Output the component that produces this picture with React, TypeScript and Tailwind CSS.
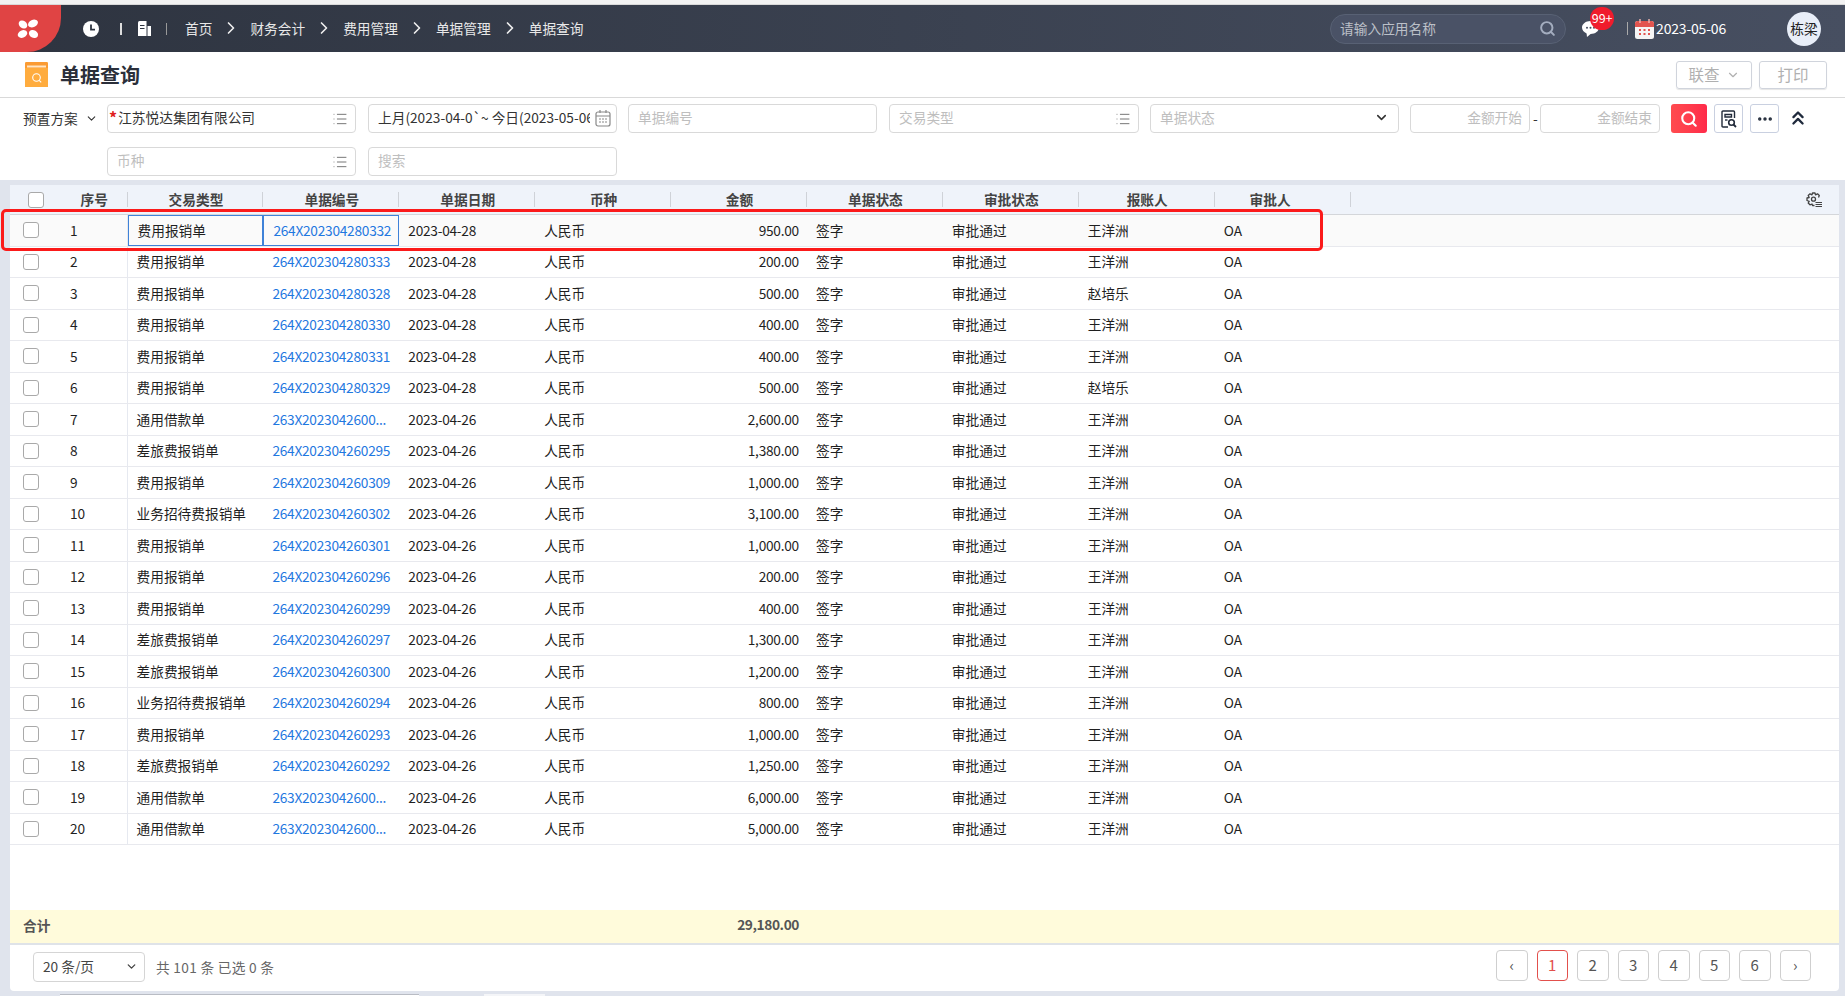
import type { ReactNode } from 'react';
import { ChevronDown, ChevronRight, ChevronsUp, Ellipsis, List, Search } from 'lucide-react';

interface DocRow {
  type: string;
  code: string;
  date: string;
  amount: string;
  person: string;
}

const FEE = '费用报销单';
const LOAN = '通用借款单';
const TRAVEL = '差旅费报销单';
const HOST = '业务招待费报销单';
const WANG = '王洋洲';
const ZHAO = '赵培乐';
const LOAN_CODE = '263X2023042600...';

const rows: DocRow[] = [
  { type: FEE, code: '264X202304280332', date: '2023-04-28', amount: '950.00', person: WANG },
  { type: FEE, code: '264X202304280333', date: '2023-04-28', amount: '200.00', person: WANG },
  { type: FEE, code: '264X202304280328', date: '2023-04-28', amount: '500.00', person: ZHAO },
  { type: FEE, code: '264X202304280330', date: '2023-04-28', amount: '400.00', person: WANG },
  { type: FEE, code: '264X202304280331', date: '2023-04-28', amount: '400.00', person: WANG },
  { type: FEE, code: '264X202304280329', date: '2023-04-28', amount: '500.00', person: ZHAO },
  { type: LOAN, code: LOAN_CODE, date: '2023-04-26', amount: '2,600.00', person: WANG },
  { type: TRAVEL, code: '264X202304260295', date: '2023-04-26', amount: '1,380.00', person: WANG },
  { type: FEE, code: '264X202304260309', date: '2023-04-26', amount: '1,000.00', person: WANG },
  { type: HOST, code: '264X202304260302', date: '2023-04-26', amount: '3,100.00', person: WANG },
  { type: FEE, code: '264X202304260301', date: '2023-04-26', amount: '1,000.00', person: WANG },
  { type: FEE, code: '264X202304260296', date: '2023-04-26', amount: '200.00', person: WANG },
  { type: FEE, code: '264X202304260299', date: '2023-04-26', amount: '400.00', person: WANG },
  { type: TRAVEL, code: '264X202304260297', date: '2023-04-26', amount: '1,300.00', person: WANG },
  { type: TRAVEL, code: '264X202304260300', date: '2023-04-26', amount: '1,200.00', person: WANG },
  { type: HOST, code: '264X202304260294', date: '2023-04-26', amount: '800.00', person: WANG },
  { type: FEE, code: '264X202304260293', date: '2023-04-26', amount: '1,000.00', person: WANG },
  { type: TRAVEL, code: '264X202304260292', date: '2023-04-26', amount: '1,250.00', person: WANG },
  { type: LOAN, code: LOAN_CODE, date: '2023-04-26', amount: '6,000.00', person: WANG },
  { type: LOAN, code: LOAN_CODE, date: '2023-04-26', amount: '5,000.00', person: WANG },
];

const crumbs = ['首页', '财务会计', '费用管理', '单据管理', '单据查询'];
const headers = ['交易类型', '单据编号', '单据日期', '币种', '金额', '单据状态', '审批状态', '报账人'];
const pages = ['‹', '1', '2', '3', '4', '5', '6', '›'];

function LogoMark() {
  return (
    <svg width="24" height="22" viewBox="0 0 24 22" fill="#fff">
      <ellipse cx="7" cy="6.5" rx="4.6" ry="3.6" transform="rotate(35 7 6.5)" />
      <ellipse cx="17" cy="5.5" rx="5.2" ry="3.6" transform="rotate(-25 17 5.5)" />
      <ellipse cx="6.5" cy="16" rx="5" ry="3.6" transform="rotate(-25 6.5 16)" />
      <ellipse cx="17.5" cy="16" rx="4.8" ry="3.8" transform="rotate(30 17.5 16)" />
    </svg>
  );
}

function ClockIcon() {
  return (
    <svg width="16" height="16" viewBox="0 0 16 16">
      <circle cx="8" cy="8" r="8" fill="#fff" />
      <path d="M8 3.5V8.6H12" fill="none" stroke="#2e3440" strokeWidth="1.8" />
    </svg>
  );
}

function BookIcon() {
  return (
    <svg width="15" height="15" viewBox="0 0 15 15">
      <path d="M1 15V1.5Q1 0 2.5 0H9.5V15Z" fill="#fff" />
      <path d="M10.5 5H14V15H10.5Z" fill="#fff" />
      <path d="M3 4.5H7.5M3 7.5H7.5" stroke="#2e3440" strokeWidth="1.2" />
    </svg>
  );
}

function ChatIcon() {
  return (
    <svg width="17" height="16" viewBox="0 0 17 16">
      <path d="M8.5 0C3.8 0 0 2.9 0 6.6c0 2.6 1.8 4.8 4.6 5.8L5 16l3.6-2.9c4.6 0 8.4-2.9 8.4-6.5S13.2 0 8.5 0Z" fill="#fff" />
      <circle cx="5" cy="6.8" r="1" fill="#454d5f" />
      <circle cx="8.5" cy="6.8" r="1" fill="#454d5f" />
      <circle cx="12" cy="6.8" r="1" fill="#454d5f" />
    </svg>
  );
}

function CalendarIcon() {
  return (
    <svg width="19" height="20" viewBox="0 0 19 20">
      <rect x="0" y="2" width="19" height="18" rx="2.5" fill="#f5f5f5" />
      <path d="M0 8V4.5Q0 2 2.5 2H16.5Q19 2 19 4.5V8Z" fill="#e25550" />
      <path d="M5 0V4M14 0V4" stroke="#f3b7b3" strokeWidth="1.4" />
      <path d="M4 11H6M8.5 11H10.5M13 11H15M4 15H6M8.5 15H10.5M13 15H15" stroke="#e25550" strokeWidth="1.8" />
    </svg>
  );
}

function PageSearchIcon() {
  return (
    <svg width="16" height="18" viewBox="0 0 16 18" fill="none" stroke="#222b3a" strokeWidth="1.4">
      <path d="M7 17H2Q1 17 1 16V2Q1 1 2 1H12.5Q13.5 1 13.5 2V8" />
      <path d="M4 4.5H10.5V7H4Z" />
      <path d="M4 10H6.5" />
      <circle cx="10.5" cy="12.5" r="2.8" strokeWidth="1.6" />
      <path d="M12.5 14.5L15 17" strokeWidth="1.8" />
    </svg>
  );
}

function GearListIcon() {
  return (
    <svg width="16" height="16" viewBox="0 0 16 16" fill="none" stroke="#444" className="ml-auto mr-[17px]">
      <path
        d="M8.5 13.5H6.5L6 12 4 12.8 2.2 11 3.2 9.3 1 8.5V6L3.2 5.5 2.2 3.5 4 1.8 6 2.8 6.5 1H9L9.5 2.8 11.5 1.8 13.3 3.5 12.5 5.5"
        strokeWidth="1.3"
        strokeLinejoin="round"
      />
      <circle cx="7.5" cy="7.2" r="2" strokeWidth="1.3" />
      <path d="M9.5 10.5H16M9.5 12.5H16M9.5 14.5H16" strokeWidth="1.1" />
    </svg>
  );
}

function OrderIcon() {
  return (
    <svg width="23" height="25" viewBox="0 0 23 25">
      <path d="M0 1.5Q0 0 1.5 0H21.5Q23 0 23 1.5V25H0Z" fill="#ffac3e" />
      <path d="M0 1.5Q0 0 1.5 0H21.5Q23 0 23 1.5V6H0Z" fill="#fb9b33" />
      <rect x="2" y="3.5" width="19" height="2" fill="#ffe6c4" />
      <circle cx="11.5" cy="15.5" r="3.8" fill="none" stroke="#fff" strokeWidth="1.1" />
      <path d="M14.2 18.3L16.2 20.3" stroke="#fff" strokeWidth="1.1" />
    </svg>
  );
}

function Checkbox() {
  return <span className="block h-4 w-4 rounded-[3px] border border-[#a9a9a9] bg-white" />;
}

function Field({ className, text, placeholder, list, right }: { className: string; text?: ReactNode; placeholder?: string; list?: boolean; right?: boolean }) {
  return (
    <div className={`flex h-[29px] items-center rounded border border-[#d9d9d9] bg-white pb-[2px] pl-[9px] pr-[7px] ${className} ${right ? 'justify-end' : 'justify-between'}`}>
      {placeholder ? <span className="text-[#bebebe]">{placeholder}</span> : text}
      {list && <List size={16} strokeWidth={1.5} className="mt-[2px] text-[#777]" />}
    </div>
  );
}

export default function App() {
  return (
    <div className="relative flex h-[996px] w-[1845px] flex-col overflow-hidden bg-[#e0e4ed] font-['Noto_Sans_CJK_SC','Noto_Sans',sans-serif] text-[13.7px] text-[#333]">
      <div className="h-[5px] shrink-0 border-b border-[#d9d9d9] bg-[#f2f2f2]" />

      {/* top bar */}
      <header className="flex h-[47px] shrink-0 items-center bg-linear-to-r from-[#2e3440] to-[#474f61] text-[#e8e8e8]">
        <div className="flex h-full w-[61px] items-center justify-center rounded-br-[34px] bg-[#e04444] pr-[6px]">
          <LogoMark />
        </div>
        <div className="ml-[22px] flex items-center">
          <ClockIcon />
          <span className="ml-[21px] h-[12px] w-[2px] bg-[#ddd]" />
          <span className="ml-[15px]">
            <BookIcon />
          </span>
          <span className="ml-[14px] h-[12px] w-px bg-[#999]" />
        </div>
        <nav className="ml-[18px] flex items-center pb-[1px]">
          {crumbs.map((c, i) => (
            <div key={c} className="flex items-center">
              {i > 0 && <ChevronRight size={20} strokeWidth={2} className="mx-[9px] text-[#eee]" />}
              <span>{c}</span>
            </div>
          ))}
        </nav>
        <div className="ml-auto flex items-center">
          <div className="flex h-[30px] w-[236px] items-center justify-between rounded-full border border-[#586174] bg-[#4a5266] pl-[9px] pr-[9px] text-[#bcc0c8]">
            <span>请输入应用名称</span>
            <Search size={17} strokeWidth={2.8} className="text-[#a4adbf]" />
          </div>
          <div className="relative ml-[16px] h-[16px] w-[17px]">
            <ChatIcon />
            <span className="absolute left-[8px] top-[-14px] flex h-[23px] w-[24px] items-center justify-center rounded-full bg-[#f01c2c] text-[12.5px] text-white">99+</span>
          </div>
          <span className="ml-[28px] h-[13px] w-px bg-[#aaa]" />
          <span className="ml-[7px]">
            <CalendarIcon />
          </span>
          <span className="ml-[2px] text-[14px] tracking-[-0.2px] text-white">2023-05-06</span>
          <div className="ml-[61px] mr-[24px] flex h-[34px] w-[34px] items-center justify-center rounded-full bg-[#e8eef8] text-[#222]">栋梁</div>
        </div>
      </header>

      {/* title */}
      <div className="flex h-[46px] shrink-0 items-center border-b border-[#d9d9d9] bg-white pl-[25px] pr-[18px]">
        <OrderIcon />
        <h1 className="ml-[12px] text-[20px] font-bold text-[#2b2f3a]">单据查询</h1>
        <div className="ml-auto flex gap-[7px] text-[15.5px] text-[#b0b0b0]">
          <button className="flex h-[28px] w-[76px] items-center justify-center gap-[6px] rounded-[3px] border border-[#d0d4dc] shadow-[0_1px_1px_rgba(0,0,0,0.1)]">
            联查 <ChevronDown size={14} strokeWidth={2} />
          </button>
          <button className="flex h-[28px] w-[68px] items-center justify-center rounded-[3px] border border-[#d0d4dc] shadow-[0_1px_1px_rgba(0,0,0,0.1)]">打印</button>
        </div>
      </div>

      {/* filters */}
      <section className="h-[82px] shrink-0 bg-white pl-[23px] pt-[6px]">
        <div className="flex items-center">
          <div className="flex w-[84px] items-center gap-[7px]">
            <span>预置方案</span>
            <ChevronDown size={13} strokeWidth={2} />
          </div>
          <Field
            className="w-[249px]"
            list
            text={
              <span className="-ml-[8px] flex items-center">
                <span className="mr-px text-[16px] font-bold leading-none text-[#e02020]">*</span>江苏悦达集团有限公司
              </span>
            }
          />
          <div className="ml-[12px] flex h-[29px] w-[249px] items-center justify-between overflow-hidden rounded border border-[#d9d9d9] pb-[2px] pl-[9px] pr-[5px]">
            <span className="w-[212px] overflow-hidden whitespace-nowrap">上月(2023-04-0`~ 今日(2023-05-06</span>
            <svg width="16" height="17" viewBox="0 0 16 17" fill="none" stroke="#888" strokeWidth="1.2" className="mt-[2px]">
              <rect x="1" y="2" width="14" height="14" rx="2" />
              <path d="M1 6H15M5 0V3M11 0V3M4 9H6M7 9H9M10 9H12M4 12H6M7 12H9M10 12H12" />
            </svg>
          </div>
          <Field className="ml-[11px] w-[249px]" placeholder="单据编号" />
          <Field className="ml-[12px] w-[250px]" placeholder="交易类型" list />
          <div className="ml-[11px] flex h-[29px] w-[249px] items-center justify-between rounded border border-[#d9d9d9] pb-[2px] pl-[9px] pr-[9px] text-[#bebebe]">
            <span>单据状态</span>
            <ChevronDown size={15} strokeWidth={2.5} className="text-[#333]" />
          </div>
          <Field className="ml-[11px] w-[120px]" placeholder="金额开始" right />
          <span className="mx-[3px] w-[4px] text-center">-</span>
          <Field className="w-[120px]" placeholder="金额结束" right />
          <button className="ml-[11px] flex h-[29px] w-[36px] items-center justify-center rounded-[3px] bg-linear-to-r from-[#ff4b4f] to-[#ff2a4a]">
            <Search size={18} strokeWidth={2.8} className="text-white" />
          </button>
          <button className="ml-[7px] flex h-[29px] w-[29px] items-center justify-center rounded-[3px] border border-[#c9d0e0]">
            <PageSearchIcon />
          </button>
          <button className="ml-[7px] flex h-[29px] w-[29px] items-center justify-center rounded-[3px] border border-[#c9d0e0]">
            <Ellipsis size={18} strokeWidth={2.6} className="text-[#222b3a]" />
          </button>
          <ChevronsUp size={22} strokeWidth={2.5} className="mb-[2px] ml-[8px] text-[#1f2a3c]" />
        </div>
        <div className="mt-[14px] flex pl-[84px]">
          <Field className="w-[249px]" placeholder="币种" list />
          <Field className="ml-[12px] w-[249px]" placeholder="搜索" />
        </div>
      </section>

      {/* table */}
      <main className="ml-[10px] mr-[6px] mt-[5px] flex h-[806px] shrink-0 flex-col overflow-hidden rounded-b bg-white">
        <div className="flex h-[30px] shrink-0 items-center border-b border-[#d4d6da] bg-[#eff3fa] font-bold text-[#444]">
          <div className="flex w-[50px] justify-center pl-[2px]">
            <Checkbox />
          </div>
          <div className="flex h-[15px] w-[67.5px] items-center justify-center border-r border-[#cfd2d8] pl-[2px]">序号</div>
          {headers.map((h) => (
            <div key={h} className="flex h-[15px] w-[135.9px] items-center justify-center border-r border-[#cfd2d8] pl-[2px]">
              {h}
            </div>
          ))}
          <div className="flex h-[15px] w-[135.9px] items-center justify-center border-r border-[#cfd2d8] pr-[24px]">审批人</div>
          <GearListIcon />
        </div>

        {rows.map((r, i) => {
          const selected = i === 0;
          return (
            <div key={i} className={`flex h-[31.5px] shrink-0 items-center border-b border-[#e8e9ee] text-[#1f1f1f] ${selected ? 'bg-[#fafafa]' : ''}`}>
              <div className="w-[50px] pl-[13px]">
                <Checkbox />
              </div>
              <div className="flex h-full w-[67.5px] items-center border-r border-[#e6e9f0] pl-[10px]">{i + 1}</div>
              <div className={`flex h-full w-[135.9px] items-center pl-[9px] ${selected ? 'border border-[#3f82d8]' : ''}`}>{r.type}</div>
              <div className={`flex h-full w-[135.9px] items-center pl-[9px] tracking-[-0.25px] text-[#1f78e0] ${selected ? 'border border-[#3f82d8]' : ''}`}>{r.code}</div>
              <div className="w-[135.9px] pl-[9px] tracking-[-0.25px]">{r.date}</div>
              <div className="w-[135.9px] pl-[9px]">人民币</div>
              <div className="w-[135.9px] pr-[8px] text-right tracking-[-0.25px]">{r.amount}</div>
              <div className="w-[135.9px] pl-[9px]">签字</div>
              <div className="w-[135.9px] pl-[9px]">审批通过</div>
              <div className="w-[135.9px] pl-[9px]">{r.person}</div>
              <div className="w-[135.9px] pl-[9px]">OA</div>
            </div>
          );
        })}

        <div className="flex-1" />

        {/* total */}
        <div className="flex h-[33px] shrink-0 items-center bg-[#fffbdb] pb-[2px] font-bold text-[#555]">
          <div className="w-[661px] pl-[13px]">合计</div>
          <div className="mb-[3px] w-[136px] pr-[8px] text-right tracking-[-0.4px]">29,180.00</div>
        </div>

        {/* pager */}
        <footer className="flex h-[48px] shrink-0 items-center border-t-2 border-[#dfe3e8] pb-[2px] pl-[23px] pr-[28px] text-[#666]">
          <div className="flex h-[30px] w-[112px] items-center justify-between rounded border border-[#d5d5d5] pb-[1px] pl-[9px] pr-[6px] text-[#444]">
            <span>20 条/页</span>
            <ChevronDown size={13} strokeWidth={2.5} />
          </div>
          <span className="ml-[11px] tracking-[0.3px]">共 101 条 已选 0 条</span>
          <div className="mb-[3px] ml-auto flex gap-[9px]">
            {pages.map((p, i) => (
              <button
                key={i}
                className={`flex h-[31px] w-[31.5px] items-center justify-center rounded-[4px] border text-[15px] ${
                  p === '1' ? 'border-[#e2504c] text-[#e2504c]' : 'border-[#cfcfcf] text-[#555]'
                }`}
              >
                {p}
              </button>
            ))}
          </div>
        </footer>
      </main>

      {/* sliver of the page below, cut off by the window */}
      <div className="mt-[3px] flex h-[2px] shrink-0 pl-[60px]">
        <div className="w-[359px] border-t border-[#b9bcc4] bg-white" />
        <div className="ml-[65px] w-[61px] bg-[#f4f5f8]" />
      </div>

      {/* red annotation drawn on the screenshot */}
      <div className="absolute left-[1px] top-[209px] h-[42px] w-[1322px] rounded-[5px] border-[3.5px] border-[#fb1a1a]" />
    </div>
  );
}
